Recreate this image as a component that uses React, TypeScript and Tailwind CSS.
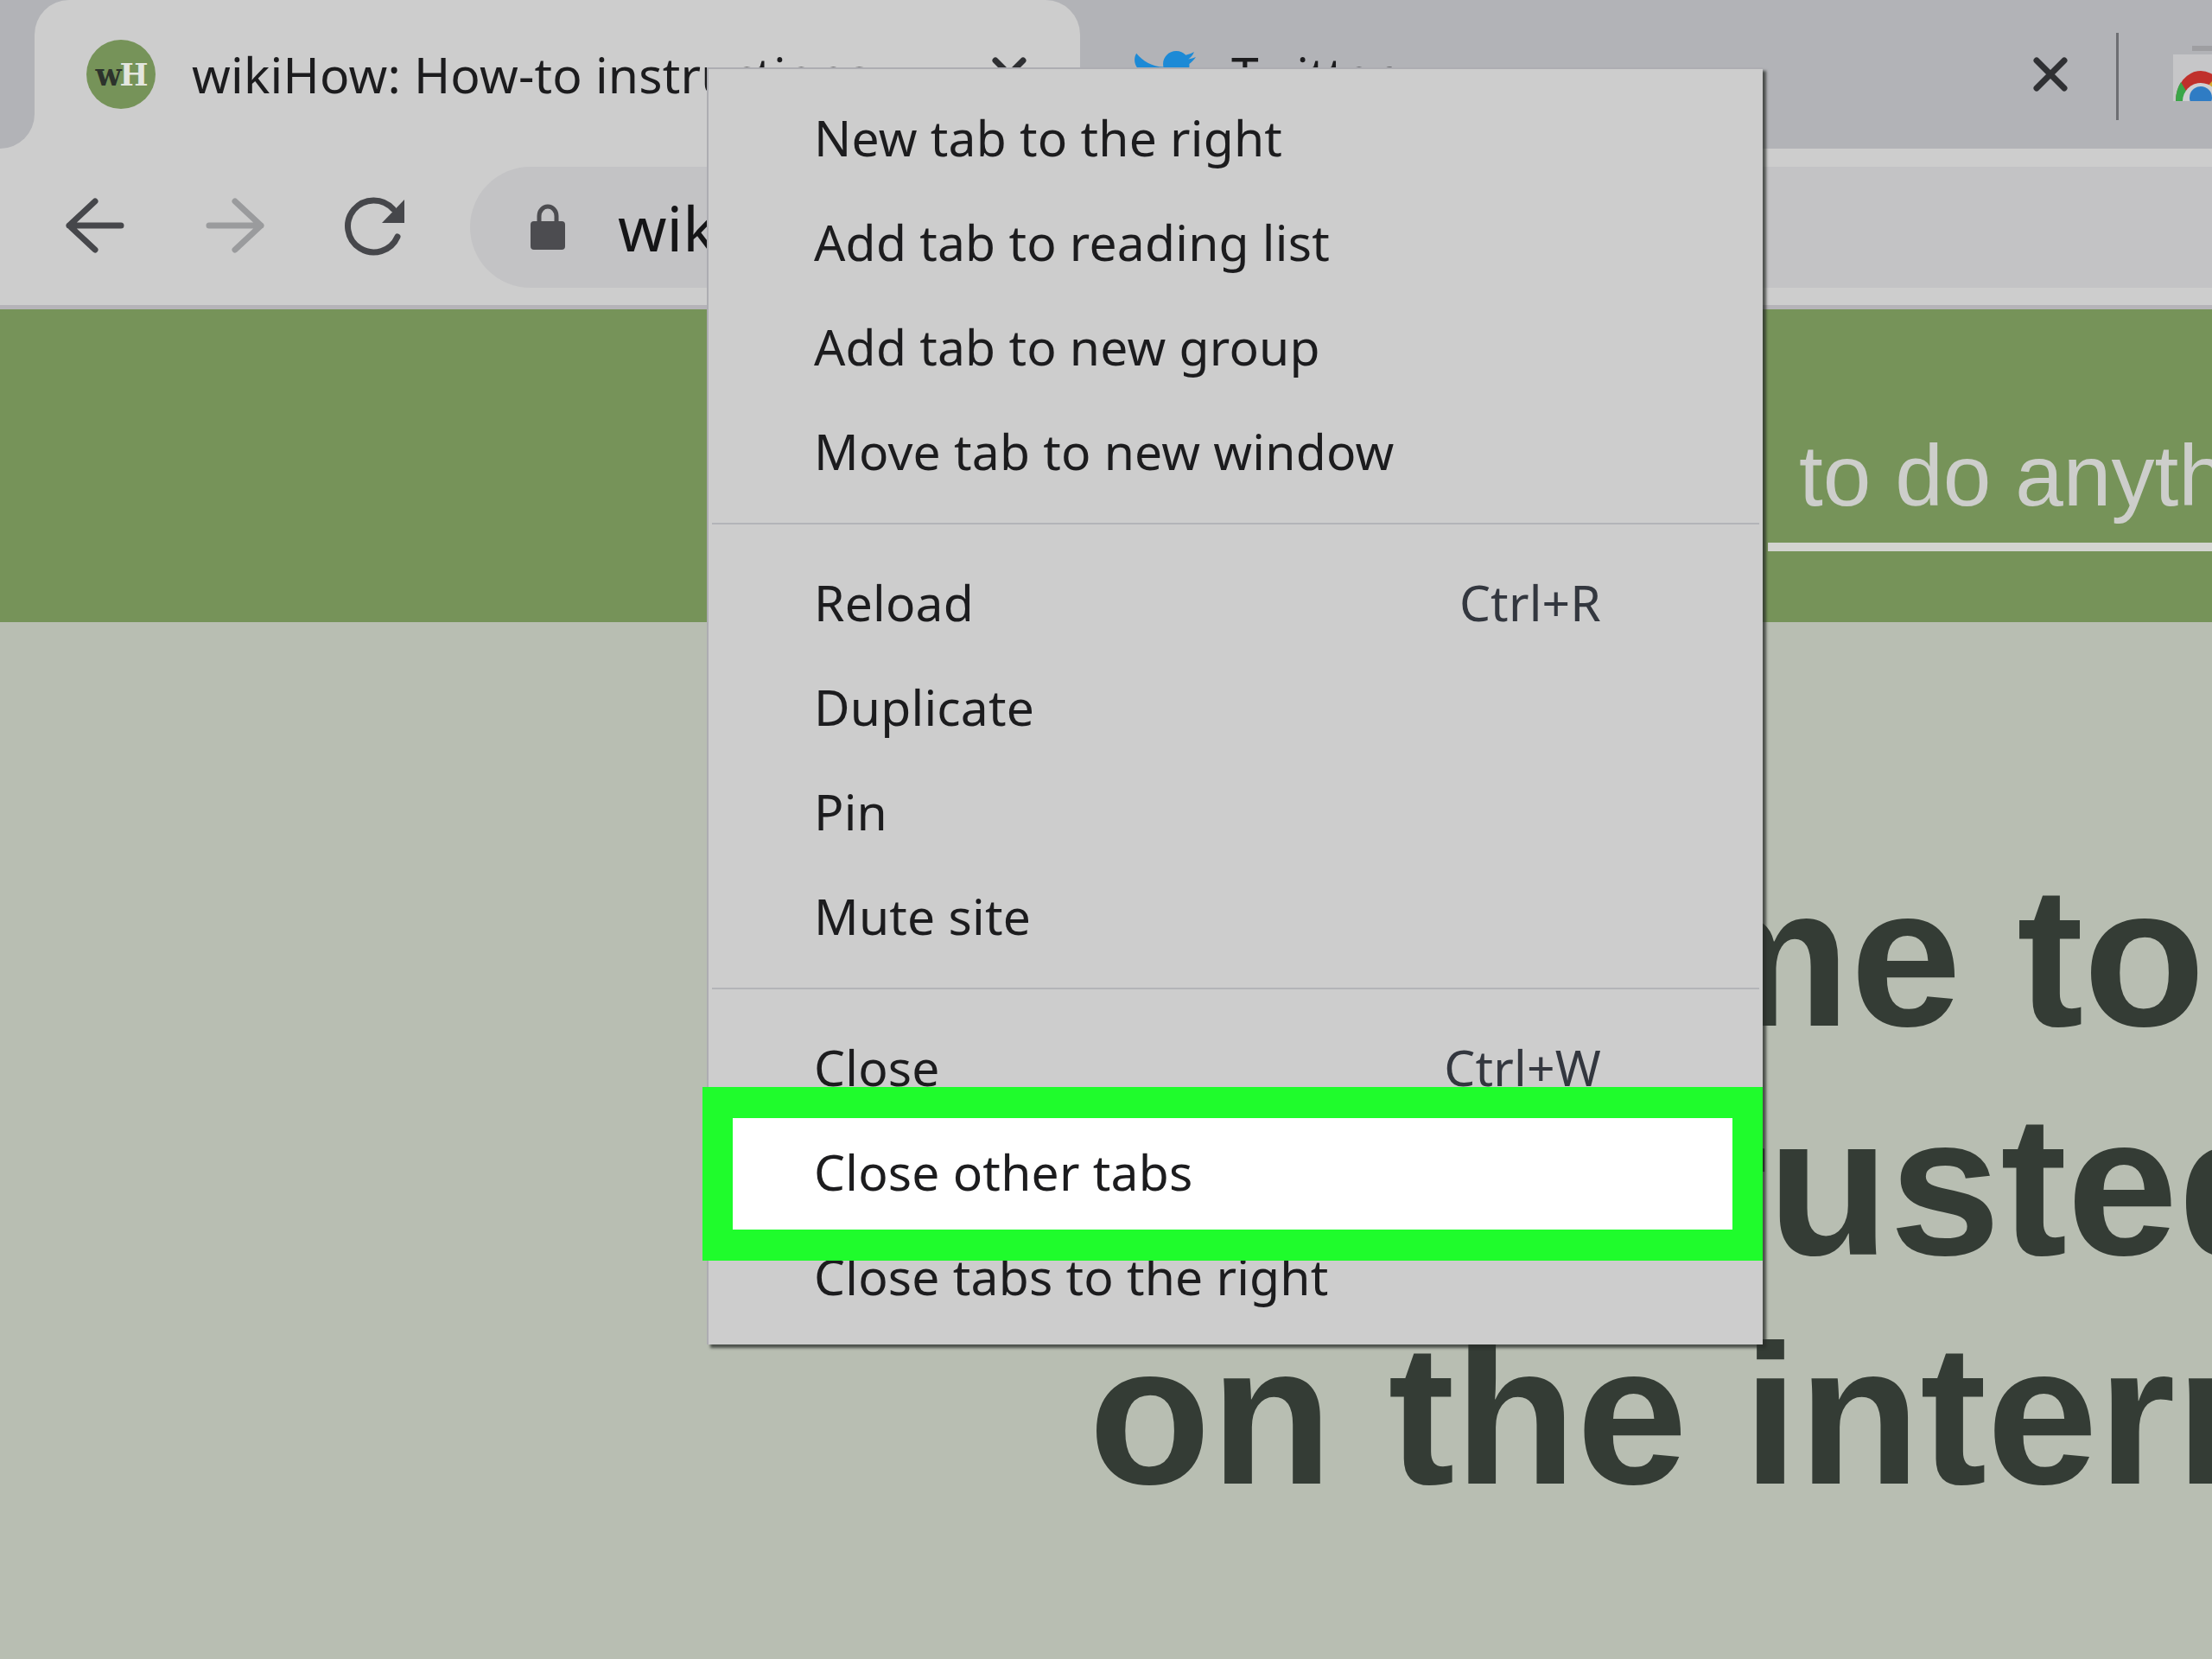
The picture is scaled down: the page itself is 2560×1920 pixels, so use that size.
import { FaTwitter } from 'react-icons/fa'

const uiFont = "font-['Noto_Sans',sans-serif]"

const menuGroups = [
  [{ label: 'New tab to the right' }, { label: 'Add tab to reading list' }, { label: 'Add tab to new group' }, { label: 'Move tab to new window' }],
  [{ label: 'Reload', shortcut: 'Ctrl+R' }, { label: 'Duplicate' }, { label: 'Pin' }, { label: 'Mute site' }],
  [{ label: 'Close', shortcut: 'Ctrl+W' }, { label: 'Close other tabs', highlighted: true }, { label: 'Close tabs to the right' }],
]

function CloseIcon() {
  return (
    <svg width="40" height="40" viewBox="0 0 40 40" className="shrink-0">
      <path d="M4 4 L36 36 M36 4 L4 36" stroke="#2f3033" strokeWidth="7" strokeLinecap="round" fill="none" />
    </svg>
  )
}

function Favicon() {
  return (
    <div className="w-[80px] h-[80px] rounded-full bg-[#769359] flex items-center justify-center shrink-0">
      <span className="font-['DejaVu_Serif',serif] font-bold text-[35px] tracking-[-2px] leading-none">
        <span className="text-[#2c332c]">w</span>
        <span className="text-[#e3e6df]">H</span>
      </span>
    </div>
  )
}

function StoreIcon() {
  return (
    <svg width="45" height="65" viewBox="0 0 45 65" className="shrink-0 ml-[63px] mt-[52px]">
      <rect x="0" y="11" width="45" height="54" fill="#c6c6c8" />
      <path d="M22 7 L22 1 L45 1 L45 7 Z" fill="#9e9ea1" />
      <ellipse cx="32" cy="65" rx="29" ry="35" fill="#c0302b" />
      <path d="M3 65 A29 35 0 0 1 9 43 L22 65 Z" fill="#3aa648" />
      <path d="M45 42 L45 56 L38 50 Z" fill="#d3ab2e" />
      <circle cx="32" cy="65" r="21" fill="#cfcfd1" />
      <circle cx="32" cy="61" r="13" fill="#2f7cc4" />
    </svg>
  )
}

function TabStrip() {
  return (
    <div className="flex h-[172px] bg-[#b2b3b7] shrink-0">
      <div className="w-[40px] flex flex-col justify-end">
        <div className="h-[40px] bg-[#cdcdcd]">
          <div className="h-full bg-[#b2b3b7] rounded-br-[40px]" />
        </div>
      </div>
      <div className="w-[1210px] bg-[#cdcdcd] rounded-t-[40px] flex items-start pl-[60px] pt-[46px]">
        <Favicon />
        <span className={`${uiFont} ml-[42px] text-[57px] leading-[80px] tracking-[0.2px] text-[#1c1c1e] whitespace-nowrap`}>wikiHow: How-to instructions</span>
        <div className="ml-auto mr-[62px] mt-[20px]">
          <CloseIcon />
        </div>
      </div>
      <div className="flex-1 flex items-start pl-[60px] min-w-0">
        <FaTwitter className="text-[#1d8ad6] w-[74px] h-[74px] mt-[52px] shrink-0" />
        <span className={`${uiFont} ml-[41px] mt-[46px] text-[57px] leading-[80px] text-[#1c1c1e]`}>Twitter</span>
        <div className="ml-auto mt-[66px]">
          <CloseIcon />
        </div>
        <div className="ml-[56px] mt-[38px] w-[3px] h-[101px] bg-[#6d6e72] shrink-0" />
        <StoreIcon />
      </div>
    </div>
  )
}

function Toolbar() {
  return (
    <div className="h-[186px] shrink-0 bg-[#cdcdcd] border-b-[5px] border-[#b5b3b8] flex items-center pl-[70px]">
      <svg width="80" height="80" viewBox="0 0 80 80" className="shrink-0">
        <path d="M40 10 L10 38 M10 38 L40 66 M10 38 L70 38" stroke="#46474b" strokeWidth="7" strokeLinecap="round" fill="none" />
      </svg>
      <svg width="80" height="80" viewBox="0 0 80 80" className="shrink-0 ml-[82px]">
        <path d="M40 10 L70 38 M70 38 L40 66 M70 38 L10 38" stroke="#9a9b9d" strokeWidth="7" strokeLinecap="round" fill="none" />
      </svg>
      <svg width="80" height="80" viewBox="0 0 80 80" className="shrink-0 ml-[81px]">
        <path d="M67 51 A 30 30 0 1 1 62 19" stroke="#46474b" strokeWidth="7" strokeLinecap="round" fill="none" />
        <path d="M75 8 L75 35 L49 35 Z" fill="#46474b" />
      </svg>
      <div className="ml-[71px] flex-1 h-[140px] bg-[#c3c3c5] rounded-l-full flex items-center pl-[70px]">
        <svg width="40" height="54" viewBox="0 0 40 54" className="shrink-0">
          <path d="M10 22 V14 A10 11 0 0 1 30 14 V22" stroke="#4c4c50" strokeWidth="5" fill="none" />
          <rect x="0" y="20" width="40" height="33" rx="4" fill="#4c4c50" />
        </svg>
        <span className={`${uiFont} ml-[61px] text-[72px] text-[#151517] whitespace-nowrap`}>wikihow.com</span>
      </div>
    </div>
  )
}

function HeroBand() {
  return (
    <div className="h-[362px] shrink-0 bg-[#769359] flex justify-end items-start">
      <div className="w-[514px] h-[280px] border-b-[10px] border-[#d3d4d0] flex items-end pl-[36px] pb-[11px] overflow-hidden">
        <span className="font-['Liberation_Sans',sans-serif] text-[100px] leading-[134px] text-[#cdcecb] whitespace-nowrap">to do anything</span>
      </div>
    </div>
  )
}

function Headline() {
  return (
    <div className="flex-1 bg-[#b8beb2] pt-[255px] font-['Liberation_Sans',sans-serif] font-bold text-[231px] leading-[265px] text-[#343c35] whitespace-nowrap overflow-hidden">
      <div className="ml-[1260px]">Welcome to the</div>
      <div className="ml-[852px]">the most trusted</div>
      <div className="ml-[1260px]">on the internet</div>
    </div>
  )
}

function ContextMenu() {
  return (
    <div className={`${uiFont} absolute left-[818px] top-[78px] w-[1222px] bg-[#cdcdcd] border-l-2 border-t-2 border-[#adadb2] shadow-[4px_4px_3px_rgba(40,44,40,0.75)] pt-[19px] pb-[18px] text-[57px] tracking-[0.2px] text-[#1c1c1e]`}>
      {menuGroups.map((group, i) => (
        <div key={i}>
          {i > 0 && <div className="h-[2px] mx-[4px] mt-[22px] mb-[30px] bg-[#b3b4b8]" />}
          {group.map(item => (
            <div key={item.label} className="relative h-[121px] flex items-center justify-between pl-[122px] pr-[187px] whitespace-nowrap">
              {item.highlighted ? (
                <div className="absolute z-10 left-[-7px] right-0 top-[-38px] h-[201px] border-x-[35px] border-y-[36px] border-[#1ffc2c] bg-white flex items-center pl-[94px] pb-[4px]">
                  {item.label}
                </div>
              ) : (
                <span>{item.label}</span>
              )}
              {item.shortcut && <span className="text-[#33373f]">{item.shortcut}</span>}
            </div>
          ))}
        </div>
      ))}
    </div>
  )
}

export default function App() {
  return (
    <div className="relative w-[2560px] h-[1920px] overflow-hidden flex flex-col bg-[#b8beb2]">
      <TabStrip />
      <Toolbar />
      <HeroBand />
      <Headline />
      <ContextMenu />
    </div>
  )
}
